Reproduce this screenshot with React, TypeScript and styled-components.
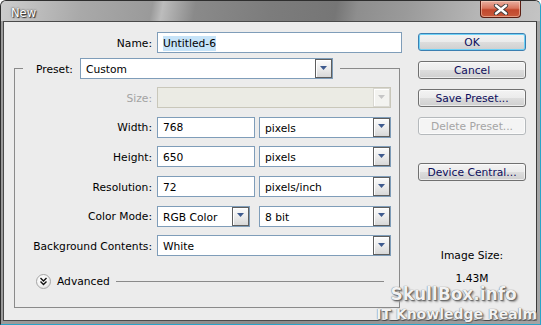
import React from 'react';
import styled, { createGlobalStyle } from 'styled-components';

const Global = createGlobalStyle`
  html, body { margin: 0; padding: 0; background: #ffffff; }
  body { font-family: "DejaVu Sans", "Liberation Sans", Arial, sans-serif; font-size: 10.7px; color: #000; }
  * { box-sizing: border-box; }
`;

const Window = styled.div`
  position: relative;
  width: 541px;
  height: 325px;
  display: flex;
  flex-direction: column;
  background: linear-gradient(90deg, #9a9a9a 0%, #8a8a8a 50%, #a4a4a4 100%);
  border: 1px solid #2e2e2e;
  border-right: 1px solid #2aa3c8;
  border-bottom: 1px solid #2aa3c8;
  border-radius: 6px 6px 0 0;
  padding: 0 3px 3px 2px;
  overflow: hidden;
`;

const TitleBar = styled.div`
  height: 20px;
  margin: 0 -3px 0 -2px;
  padding-left: 10px;
  display: flex;
  align-items: flex-start;
  background: linear-gradient(100deg, #cdcdcd 0%, #a9a9a9 15%, #9a9a9a 28%, #bcbcbc 30%, #8a8a8a 36%, #7c7c7c 50%, #767676 62%, #8e8e8e 66%, #9a9a9a 75%, #b5b5b5 88%, #c4c4c4 100%);
`;

const Title = styled.span`
  margin-top: 5px;
  color: #ffffff;
  font-size: 11.5px;
  text-shadow: 0 0 2px #222, 1px 1px 1px #333;
`;

const CloseBtn = styled.div`
  margin-left: auto;
  margin-right: 19px;
  width: 41px;
  height: 17px;
  display: flex;
  align-items: center;
  justify-content: center;
  border: 1px solid #5b1d12;
  border-top: none;
  border-radius: 0 0 4px 4px;
  background: linear-gradient(#e9b0a2 0%, #d9765e 45%, #c2482d 55%, #c85a3c 100%);
  box-shadow: inset 0 0 0 1px rgba(255, 220, 200, 0.5);
`;

const Client = styled.div`
  flex: 1;
  display: flex;
  background: #ececec;
  border: 1px solid #4a4a4a;
  border-right-color: #3a3a3a;
`;

const LeftPane = styled.div`
  width: 400px;
  display: flex;
  flex-direction: column;
  padding-top: 10px;
`;

const NameRow = styled.div`
  display: grid;
  grid-template-columns: 148px 245px;
  column-gap: 5px;
  height: 21px;
`;

const Label = styled.span<{ $disabled?: boolean }>`
  display: flex;
  align-items: center;
  justify-content: flex-end;
  white-space: nowrap;
  padding-top: 1px;
  color: ${p => (p.$disabled ? '#a3a3a3' : '#000')};
`;

const TextBox = styled.div<{ $w?: number }>`
  width: ${p => (p.$w ? `${p.$w}px` : '100%')};
  height: 21px;
  display: flex;
  align-items: center;
  padding: 1px 5px 0 5px;
  background: #ffffff;
  border: 1px solid #7f9db9;
  white-space: nowrap;
`;

const Selected = styled.span`
  background: #c6e3f8;
  padding: 1px 0;
`;

const Group = styled.fieldset`
  margin: 5px 0 0 10px;
  width: 386px;
  padding: 8px 0 18px 0;
  border: 1px solid #8a8a8a;
  min-width: 0;
`;

const Legend = styled.legend`
  margin-left: 8px;
  padding: 0 7px 0 13px;
  display: flex;
  align-items: center;
  gap: 6px;
`;

const LegendLabel = styled.span`
  width: 38px;
  white-space: nowrap;
  padding-top: 1px;
`;

const Rows = styled.div`
  display: flex;
  flex-direction: column;
  gap: 8.7px;
`;

const FieldRow = styled.div`
  display: grid;
  grid-template-columns: 137px 234px;
  column-gap: 5px;
  height: 21px;
`;

const Controls = styled.div<{ $gap: number }>`
  display: flex;
  gap: ${p => p.$gap}px;
`;

const SelectBox = styled.div<{ $w?: number; $disabled?: boolean }>`
  width: ${p => (p.$w ? `${p.$w}px` : '100%')};
  height: 21px;
  display: flex;
  border: 1px solid ${p => (p.$disabled ? '#c9c7ba' : '#7f9db9')};
  background: ${p => (p.$disabled ? '#ebebe4' : '#ffffff')};
`;

const SelectValue = styled.span`
  flex: 1;
  display: flex;
  align-items: center;
  padding: 2px 0 0 5px;
  white-space: nowrap;
`;

const DropBtn = styled.span<{ $disabled?: boolean }>`
  width: 17px;
  display: flex;
  align-items: center;
  justify-content: center;
  padding-bottom: 2px;
  border: 1px solid ${p => (p.$disabled ? '#d9d8d2' : '#5e5e5e')};
  box-shadow: inset 1px 1px 0 #ffffff;
  background: ${p =>
    p.$disabled ? '#f3f3f0' : 'linear-gradient(#fbfbfb 0%, #ececec 50%, #d8d8d8 100%)'};
`;

const AdvancedRow = styled.div`
  margin-top: 17px;
  height: 16px;
  display: flex;
  align-items: center;
  padding: 0 15px 0 21px;
`;

const RoundToggle = styled.span`
  width: 15px;
  height: 15px;
  border-radius: 50%;
  border: 1px solid #a6a6a6;
  background: radial-gradient(circle at 40% 35%, #ffffff 0%, #f4f4f4 50%, #d6d6d6 100%);
  display: flex;
  align-items: center;
  justify-content: center;
`;

const AdvText = styled.span`
  margin-left: 6px;
  padding-top: 1px;
`;

const Rule = styled.span`
  flex: 1;
  height: 1px;
  margin-left: 6px;
  background: #8a8a8a;
`;

const RightPane = styled.div`
  flex: 1;
  display: flex;
  flex-direction: column;
  padding: 11px 0 0 14px;
`;

const ButtonStack = styled.div`
  display: flex;
  flex-direction: column;
  gap: 10px;
`;

const Button = styled.div<{ $default?: boolean; $disabled?: boolean; $spaced?: boolean }>`
  width: 108px;
  height: 18px;
  margin-top: ${p => (p.$spaced ? '28px' : '0')};
  display: flex;
  align-items: center;
  justify-content: center;
  padding-top: 1px;
  border-radius: 3px;
  white-space: nowrap;
  color: ${p => (p.$disabled ? '#a5a5a5' : '#0d0d5c')};
  border: 1px solid ${p => (p.$default ? '#3c7fb1' : p.$disabled ? '#b5b9bc' : '#707070')};
  background: ${p =>
    p.$disabled
      ? '#f4f4f4'
      : 'linear-gradient(#f3f3f3 0%, #ebebeb 50%, #dddddd 51%, #cfcfcf 100%)'};
  box-shadow: ${p => (p.$default ? 'inset 0 0 0 1px #6fd2f7' : 'inset 0 0 0 1px rgba(255,255,255,0.6)')};
`;

const ImageSize = styled.div`
  margin-top: 68px;
  width: 108px;
  display: flex;
  flex-direction: column;
  align-items: center;
  gap: 9px;
  line-height: 14px;
`;

const Watermark = styled.div`
  position: absolute;
  right: 3px;
  bottom: 3px;
  display: flex;
  flex-direction: column;
  align-items: center;
  font-family: "DejaVu Sans", "Liberation Sans", sans-serif;
  font-weight: bold;
  color: #f2f2f2;
  line-height: 1;
  pointer-events: none;
  text-shadow: 0 0 1px #4a4a4a, 1px 1px 1px #6a6a6a, 2px 2px 2px #a0a0a0;
`;

const WmBig = styled.span`
  font-size: 17px;
  margin-right: 6px;
`;

const WmSmall = styled.span`
  font-size: 14px;
  margin-top: 4px;
`;

const Arrow = ({ disabled }: { disabled?: boolean }) => (
  <svg width="7" height="4" viewBox="0 0 7 4">
    <polygon points="0,0 7,0 3.5,4" fill={disabled ? '#c6c6c6' : '#3e5a8e'} />
  </svg>
);

const Select = ({ value, w, disabled }: { value?: string; w?: number; disabled?: boolean }) => (
  <SelectBox $w={w} $disabled={disabled}>
    <SelectValue>{value}</SelectValue>
    <DropBtn $disabled={disabled}>
      <Arrow disabled={disabled} />
    </DropBtn>
  </SelectBox>
);

const CloseGlyph = () => (
  <svg width="16" height="11" viewBox="0 0 16 11">
    <path d="M3 1.5 L13 9.5 M13 1.5 L3 9.5" stroke="#3a3a3a" strokeWidth="4.2" strokeLinecap="round" />
    <path d="M3 1.5 L13 9.5 M13 1.5 L3 9.5" stroke="#ffffff" strokeWidth="2.4" strokeLinecap="round" />
  </svg>
);

const Chevrons = () => (
  <svg width="9" height="9" viewBox="0 0 9 9">
    <path d="M1.5 1 L4.5 4 L7.5 1 M1.5 4.5 L4.5 7.5 L7.5 4.5" stroke="#111" strokeWidth="1.4" fill="none" />
  </svg>
);

export default function App() {
  return (
    <>
      <Global />
      <Window>
        <TitleBar>
          <Title>New</Title>
          <CloseBtn>
            <CloseGlyph />
          </CloseBtn>
        </TitleBar>
        <Client>
          <LeftPane>
            <NameRow>
              <Label>Name:</Label>
              <TextBox>
                <Selected>Untitled-6</Selected>
              </TextBox>
            </NameRow>
            <Group>
              <Legend>
                <LegendLabel>Preset:</LegendLabel>
                <Select value="Custom" w={253} />
              </Legend>
              <Rows>
                <FieldRow>
                  <Label $disabled>Size:</Label>
                  <Select w={234} disabled />
                </FieldRow>
                <FieldRow>
                  <Label>Width:</Label>
                  <Controls $gap={4}>
                    <TextBox $w={98}>768</TextBox>
                    <Select value="pixels" w={132} />
                  </Controls>
                </FieldRow>
                <FieldRow>
                  <Label>Height:</Label>
                  <Controls $gap={4}>
                    <TextBox $w={98}>650</TextBox>
                    <Select value="pixels" w={132} />
                  </Controls>
                </FieldRow>
                <FieldRow>
                  <Label>Resolution:</Label>
                  <Controls $gap={4}>
                    <TextBox $w={98}>72</TextBox>
                    <Select value="pixels/inch" w={132} />
                  </Controls>
                </FieldRow>
                <FieldRow>
                  <Label>Color Mode:</Label>
                  <Controls $gap={9}>
                    <Select value="RGB Color" w={93} />
                    <Select value="8 bit" w={132} />
                  </Controls>
                </FieldRow>
                <FieldRow>
                  <Label>Background Contents:</Label>
                  <Select value="White" w={234} />
                </FieldRow>
              </Rows>
              <AdvancedRow>
                <RoundToggle>
                  <Chevrons />
                </RoundToggle>
                <AdvText>Advanced</AdvText>
                <Rule />
              </AdvancedRow>
            </Group>
          </LeftPane>
          <RightPane>
            <ButtonStack>
              <Button $default>OK</Button>
              <Button>Cancel</Button>
              <Button>Save Preset...</Button>
              <Button $disabled>Delete Preset...</Button>
            </ButtonStack>
            <Button $spaced>Device Central...</Button>
            <ImageSize>
              <span>Image Size:</span>
              <span>1.43M</span>
            </ImageSize>
          </RightPane>
        </Client>
        <Watermark>
          <WmBig>SkullBox.info</WmBig>
          <WmSmall>IT Knowledge Realm</WmSmall>
        </Watermark>
      </Window>
    </>
  );
}
